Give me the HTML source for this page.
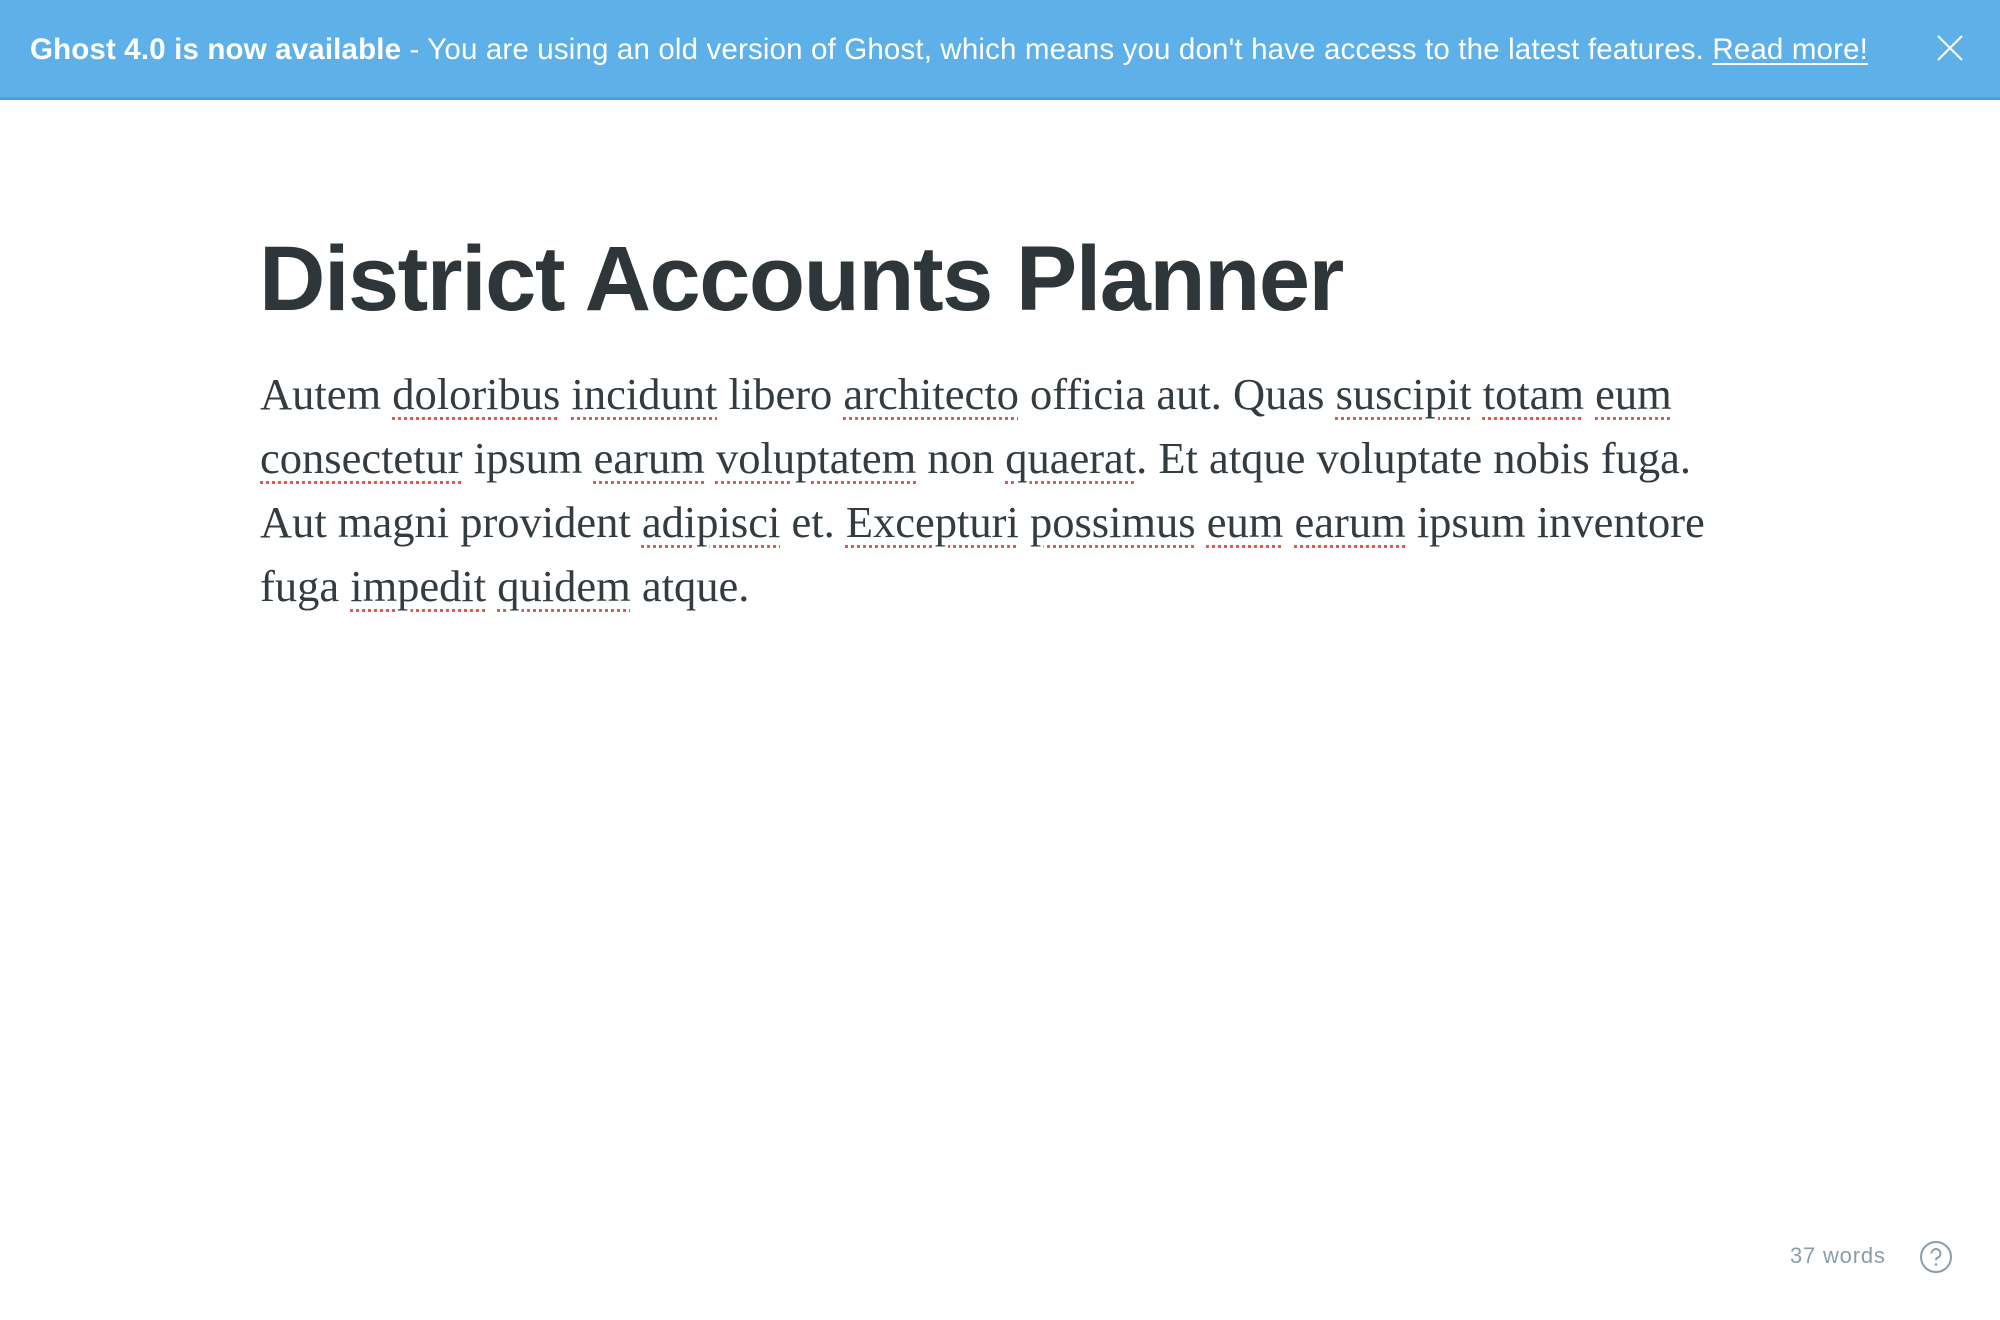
<!DOCTYPE html>
<html><head><meta charset="utf-8"><style>
html,body{margin:0;padding:0;background:#fff;width:2000px;height:1320px;overflow:hidden;}
.banner{position:absolute;left:0;top:0;width:2000px;height:97px;background:#5eb0e8;border-bottom:3px solid #4a9fe0;}
.btxt{position:absolute;left:30px;top:33px;font-family:"Liberation Sans",sans-serif;font-size:29.5px;color:#fff;white-space:nowrap;letter-spacing:0.15px;}
.btxt b{font-weight:bold}
.btxt u{text-decoration:underline;text-underline-offset:4px}
h1{position:absolute;left:259px;top:219px;margin:0;font-family:"Liberation Sans",sans-serif;font-weight:bold;font-size:92px;color:#2e3639;letter-spacing:-1.5px;line-height:120px;white-space:nowrap;}
.body{position:absolute;left:260px;top:362px;font-family:"Liberation Serif",serif;font-size:44.5px;line-height:64px;color:#333c40;}
.body div{white-space:nowrap}
.s{text-decoration:underline dotted #e25a4f;text-decoration-thickness:3px;text-underline-offset:8px}
.wc{position:absolute;left:1790px;top:1243px;font-family:"Liberation Sans",sans-serif;font-size:22px;color:#8a9dab;letter-spacing:0.8px}
</style></head><body>
<div class="banner"><div class="btxt"><b>Ghost 4.0 is now available</b> - You are using an old version of Ghost, which means you don't have access to the latest features. <u>Read more!</u></div>
<svg style="position:absolute;left:1930px;top:30px" width="40" height="40"><path d="M8 6 L32 30 M32 6 L8 30" stroke="#fff" stroke-width="2.2" fill="none"/></svg></div>
<h1>District Accounts Planner</h1>
<div class="body">
<div>Autem <span class="s">doloribus</span> <span class="s">incidunt</span> libero <span class="s">architecto</span> officia aut. Quas <span class="s">suscipit</span> <span class="s">totam</span> <span class="s">eum</span></div>
<div><span class="s">consectetur</span> ipsum <span class="s">earum</span> <span class="s">voluptatem</span> non <span class="s">quaerat</span>. Et atque voluptate nobis fuga.</div>
<div>Aut magni provident <span class="s">adipisci</span> et. <span class="s">Excepturi</span> <span class="s">possimus</span> <span class="s">eum</span> <span class="s">earum</span> ipsum inventore</div>
<div>fuga <span class="s">impedit</span> <span class="s">quidem</span> atque.</div>
</div>
<div class="wc">37 words</div>
<svg style="position:absolute;left:1919px;top:1240px" width="34" height="34"><circle cx="17" cy="17" r="15" stroke="#8a9dab" stroke-width="2" fill="none"/><path d="M12.5 13.5 a4.5 4.5 0 1 1 6 4.2 c-1.2 .5 -1.5 1.3 -1.5 2.6" stroke="#8a9dab" stroke-width="2" fill="none"/><circle cx="17" cy="24.5" r="1.3" fill="#8a9dab"/></svg>
</body></html>
